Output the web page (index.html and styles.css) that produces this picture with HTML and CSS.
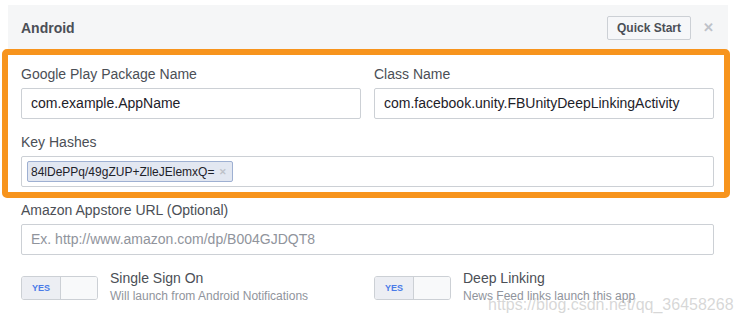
FILE: index.html
```html
<!DOCTYPE html>
<html>
<head>
<meta charset="utf-8">
<link rel="stylesheet" href="styles.css">
</head>
<body>
<div class="page">
  <div class="header">
    <div class="title">Android</div>
    <div class="actions">
      <button class="btn">Quick Start</button>
      <span class="close">&#x2715;</span>
    </div>
  </div>
  <div class="content">
    <div class="row two">
      <div class="field">
        <div class="label">Google Play Package Name</div>
        <div class="input">com.example.AppName</div>
      </div>
      <div class="field">
        <div class="label">Class Name</div>
        <div class="input">com.facebook.unity.FBUnityDeepLinkingActivity</div>
      </div>
    </div>
    <div class="field">
      <div class="label">Key Hashes</div>
      <div class="input tags"><span class="tag">84lDePPq/49gZUP+ZlleJElemxQ=<span class="tag-x">&#x2715;</span></span></div>
    </div>
    <div class="field">
      <div class="label">Amazon Appstore URL (Optional)</div>
      <div class="input placeholder">Ex. http://www.amazon.com/dp/B004GJDQT8</div>
    </div>
    <div class="row two toggles">
      <div class="opt">
        <div class="toggle"><span class="yes">YES</span><span class="knob"></span></div>
        <div class="opt-text">
          <div class="opt-title">Single Sign On</div>
          <div class="opt-sub">Will launch from Android Notifications</div>
        </div>
      </div>
      <div class="opt">
        <div class="toggle"><span class="yes">YES</span><span class="knob"></span></div>
        <div class="opt-text">
          <div class="opt-title">Deep Linking</div>
          <div class="opt-sub">News Feed links launch this app</div>
        </div>
      </div>
    </div>
  </div>
  <div class="highlight"></div>
  <div class="watermark">https://blog.csdn.net/qq_36458268</div>
</div>
</body>
</html>
```

FILE: styles.css
```css
* { box-sizing: border-box; }
html, body { margin: 0; padding: 0; background: #fff; }
body { font-family: "Liberation Sans", Arial, sans-serif; color: #4b4f56; }
.page { position: relative; width: 740px; height: 323px; overflow: hidden; padding-top: 5px; }
.header {
  margin-left: 8px; width: 720px; height: 45px;
  background: #f5f6f7;
  display: flex; align-items: center; justify-content: space-between;
  padding: 0 14px 0 13px;
}
.title { font-size: 14px; font-weight: bold; color: #4b4f56; }
.actions { display: flex; align-items: center; gap: 12px; }
.btn {
  font-family: "Liberation Sans", Arial, sans-serif;
  font-size: 12px; font-weight: bold; color: #4b4f56;
  background: #f6f7f9; border: 1px solid #ccd0d5; border-radius: 2px;
  height: 24px; padding: 0 9px;
}
.close { font-size: 13px; color: #bec2c9; font-weight: bold; }
.content { margin-left: 21px; width: 693px; padding-top: 16px; }
.row.two { display: grid; grid-template-columns: 340px 340px; column-gap: 13px; }
.field { margin-bottom: 15px; }
.label { font-size: 14px; line-height: 17px; color: #4b4f56; margin-bottom: 5px; }
.input {
  height: 31px; border: 1px solid #ccd0d5; border-radius: 2px;
  font-size: 14px; line-height: 29px; color: #1d2129; padding: 0 9px;
  white-space: nowrap; overflow: hidden; background: #fff;
}
.input.placeholder { color: #90949c; }
.input.tags { padding: 4px 5px; line-height: normal; display: flex; align-items: flex-start; }
.tag {
  display: inline-flex; align-items: center; height: 21px;
  background: #e2e7f1; border: 1px solid #9eb0d2; border-radius: 2px;
  font-size: 12px; color: #1d2129; padding: 0 5px 0 3px;
}
.tag-x { color: #bec2c9; font-size: 9px; margin-left: 5px; font-weight: bold; }
.toggles { margin-top: 6px; }
.opt { display: flex; align-items: flex-start; gap: 12px; }
.toggle {
  margin-top: 6px; width: 77px; height: 24px; flex: none;
  border: 1px solid #ccd0d5; border-radius: 3px; display: flex; overflow: hidden;
}
.yes {
  width: 39px; background: #eceef3; border-right: 1px solid #ccd0d5;
  color: #4a7be8; font-size: 9px; font-weight: bold;
  display: flex; align-items: center; justify-content: center;
}
.knob { flex: 1; background: #f8f9fa; }
.opt-title { font-size: 14px; line-height: 17px; color: #4b4f56; }
.opt-sub { font-size: 12px; line-height: 16px; color: #90949c; margin-top: 1px; }
.highlight {
  position: absolute; left: 2px; top: 49px; width: 728px; height: 149px;
  border: 6px solid #f7941d; border-radius: 5px;
}
.watermark {
  position: absolute; left: 488px; top: 296px;
  font-size: 16px; color: rgba(175, 175, 175, 0.5); white-space: nowrap;
}
```
